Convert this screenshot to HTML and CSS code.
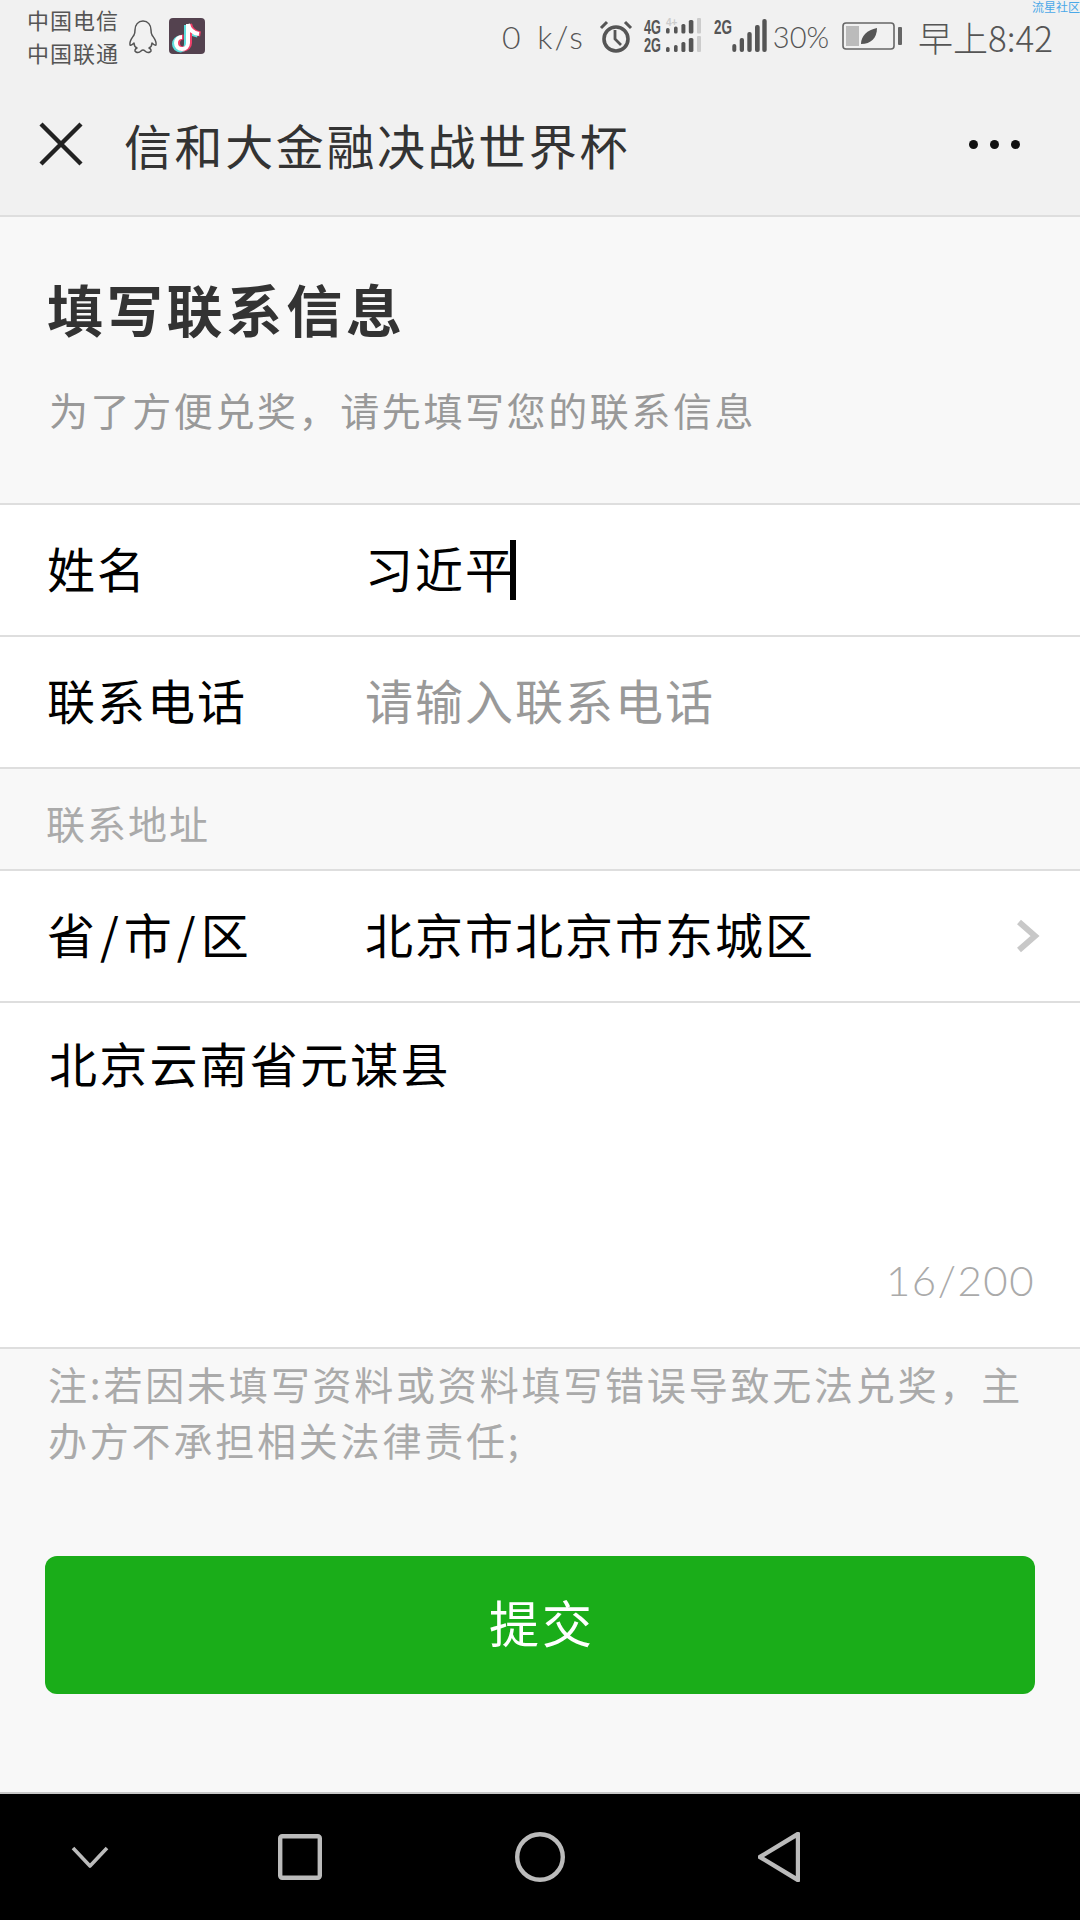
FILE: index.html
```html
<!DOCTYPE html>
<html>
<head>
<title>填写联系信息</title>
<meta http-equiv='Content-Type' content='text/html; charset=utf-8' />
<link rel="stylesheet" href="styles.css">
</head>
<body>
<div class="page">
	<div class="top">
		<div class="status">
			<div class="carrier"><div>中国电信</div><div>中国联通</div></div>
			<svg class="qq" width="30" height="34" viewBox="0 0 30 34" fill="none" stroke="#555" stroke-width="1.5" stroke-linejoin="round">
				<path d="M15 1c-5 0-8 4-8 9 0 2 0 3-1 5-2 3-5 6-4 10 1 1 3-1 4-2 0 2 1 4 3 5-2 1-3 3-1 4 2 1 4 0 5-1 1-1 1-1 2-1s1 0 2 1c1 1 3 2 5 1 2-1 1-3-1-4 2-1 3-3 3-5 1 1 3 3 4 2 1-4-2-7-4-10-1-2-1-3-1-5 0-5-3-9-8-9z"/>
			</svg>
			<svg class="tiktok" width="36" height="36" viewBox="0 0 36 36">
				<rect width="36" height="36" rx="4" fill="#54424f"/>
				<path d="M19 6v19a6 6 0 1 1-6-6M19 6c1 5 5 9 11 10" fill="none" stroke="#5fe0e0" stroke-width="5" transform="translate(-1.5 1)"/>
				<path d="M19 6v19a6 6 0 1 1-6-6M19 6c1 5 5 9 11 10" fill="none" stroke="#f0406a" stroke-width="5" transform="translate(1.5 0)"/>
				<path d="M19 6v19a6 6 0 1 1-6-6M19 6c1 5 5 9 11 10" fill="none" stroke="#fff" stroke-width="4"/>
			</svg>
			<div class="indicators">
				<span class="speed">0 k/s</span>
				<svg class="alarm" width="32" height="34" viewBox="0 0 32 34" fill="none" stroke="#555">
					<circle cx="16" cy="20" r="12" stroke-width="3.6"/>
					<path d="M15 11v9l6 6" stroke-width="2.8"/>
					<path d="M1 9l6-6M31 9l-6-6" stroke-width="3"/>
				</svg>
				<svg class="dual" width="58" height="36" viewBox="0 0 58 36">
					<text x="0" y="16" class="net" textLength="17" lengthAdjust="spacingAndGlyphs">4G</text>
					<text x="0" y="34" class="net" textLength="17" lengthAdjust="spacingAndGlyphs">2G</text>
					<text x="22" y="8" class="plus">4+</text>
					<g fill="#555">
						<rect x="22" y="10" width="3.6" height="5.5" rx="1.6"/><rect x="30" y="8.5" width="3.6" height="7" rx="1.6"/><rect x="37.4" y="6" width="4" height="9.5" rx="1.6"/><rect x="44.8" y="2" width="4.6" height="13.5" rx="1.6"/>
						<rect x="22" y="29" width="3.6" height="5" rx="1.6"/><rect x="30" y="27" width="3.6" height="7" rx="1.6"/><rect x="37.4" y="24" width="4" height="10" rx="1.6"/><rect x="44.8" y="20" width="4.6" height="14" rx="1.6"/>
					</g>
					<rect x="53" y="0" width="4" height="15.5" rx="1" fill="#ccc"/>
					<rect x="53" y="18" width="4" height="16" rx="1" fill="#ccc"/>
				</svg>
				<svg class="single" width="54" height="36" viewBox="0 0 54 36">
					<text x="0" y="16" class="net" textLength="18" lengthAdjust="spacingAndGlyphs">2G</text>
					<g fill="#555">
						<rect x="18.3" y="26" width="4" height="8" rx="2"/><rect x="25.7" y="20" width="4.3" height="14" rx="2"/><rect x="33.3" y="14" width="4.4" height="20" rx="2"/><rect x="41" y="7" width="4.7" height="27" rx="2"/><rect x="48.3" y="1" width="4.4" height="33" rx="2"/>
					</g>
				</svg>
				<span class="pct">30%</span>
				<svg class="battery" width="61" height="28" viewBox="0 0 61 28">
					<rect x="1" y="1" width="51" height="26" rx="3" fill="none" stroke="#666" stroke-width="1.6"/>
					<rect x="4" y="4" width="13" height="20" fill="#bbb"/>
					<path d="M19 22c0-8 6-14 16-16 0 10-6 16-16 16z" fill="#555"/>
					<rect x="56" y="5" width="4" height="18" rx="1" fill="#666"/>
				</svg>
				<span class="clock">早上8:42</span>
			</div>
			<span class="mark">流星社区</span>
		</div>
		<div class="nav">
			<svg class="close" width="44" height="44" viewBox="0 0 44 44" fill="none" stroke="#222" stroke-width="4.4">
				<path d="M2 2l40 40M42 2L2 42"/>
			</svg>
			<div class="title">信和大金融决战世界杯</div>
			<div class="more"><i></i><i></i><i></i></div>
		</div>
	</div>

	<div class="intro">
		<h1>填写联系信息</h1>
		<p>为了方便兑奖，请先填写您的联系信息</p>
	</div>

	<div class="group">
		<div class="row">
			<span class="label">姓名</span>
			<span class="value">习近平<b class="caret"></b></span>
		</div>
		<div class="row">
			<span class="label">联系电话</span>
			<span class="value hint">请输入联系电话</span>
		</div>
	</div>

	<div class="section">联系地址</div>

	<div class="group">
		<div class="row">
			<span class="label wide">省/市/区</span>
			<span class="value">北京市北京市东城区</span>
			<svg class="arrow" width="24" height="34" viewBox="0 0 24 34" fill="none" stroke="#c8c8c8" stroke-width="6">
				<path d="M3 3l16 14L3 31"/>
			</svg>
		</div>
		<div class="area">
			<div class="area-text">北京云南省元谋县</div>
			<div class="count">16/200</div>
		</div>
	</div>

	<p class="note">注:若因未填写资料或资料填写错误导致无法兑奖，主办方不承担相关法律责任;</p>

	<div class="btn">提交</div>

	<div class="spacer"></div>

	<div class="keys">
		<svg width="38" height="22" viewBox="0 0 38 22" fill="none" stroke="#bbb" stroke-width="3.6" stroke-linejoin="round"><path d="M2 2l17 18L36 2"/></svg>
		<svg width="44" height="46" viewBox="0 0 44 46" fill="none" stroke="#bbb" stroke-width="4.4"><rect x="2.2" y="2.2" width="39.6" height="41.6" rx="2"/></svg>
		<svg width="50" height="50" viewBox="0 0 50 50" fill="none" stroke="#bbb" stroke-width="4.4"><circle cx="25" cy="25" r="22.8"/></svg>
		<svg width="42" height="50" viewBox="0 0 42 50" fill="none" stroke="#bbb" stroke-width="4.4" stroke-linejoin="round"><path d="M40 2v46L2 25z"/></svg>
	</div>
</div>
</body>
</html>
```

FILE: styles.css
```css
html,body{margin:0;padding:0;}
body{font-family:"Noto Sans CJK SC","Noto Sans",sans-serif;color:#000;background:#f8f8f8;}
.page{width:1080px;height:1920px;display:flex;flex-direction:column;overflow:hidden;}

.top{background:#f1f1f1;border-bottom:2px solid #dedede;}
.status{position:relative;height:72px;padding-left:27px;display:flex;align-items:center;color:#555;}
.status svg{overflow:visible;}
.carrier{width:92px;font-size:22px;line-height:33px;letter-spacing:1px;margin-top:-1px;}
.qq{margin-left:9px;margin-top:2px;}
.tiktok{margin-left:11px;}
.indicators{margin-left:auto;padding-right:27px;display:flex;align-items:center;}
.speed{font-family:Lato,sans-serif;font-size:32px;font-weight:300;word-spacing:4px;letter-spacing:2px;}
.alarm{margin-left:15px;}
.dual{margin-left:12px;}
.single{margin-left:12px;}
.net{font-family:"Liberation Sans Narrow","Liberation Sans",sans-serif;font-size:20px;font-weight:700;fill:#555;}
.plus{font-family:"Liberation Sans",sans-serif;font-size:10px;font-weight:700;fill:#ccc;}
.pct{font-family:Lato,sans-serif;font-size:29px;font-weight:300;margin-left:5px;}
.battery{margin-left:13px;}
.clock{font-size:35px;font-weight:300;margin-left:15px;white-space:nowrap;}
.mark{position:absolute;top:0;right:0;font-size:12px;line-height:13px;color:#4aa8e8;}

.nav{height:143px;padding:0 60px 0 39px;display:flex;align-items:center;}
.close{flex:none;}
.title{margin-left:41px;font-size:48px;letter-spacing:2.6px;color:#333;flex:1;}
.more{display:flex;gap:12px;margin-top:2px;}
.more i{display:block;width:9px;height:9px;border-radius:50%;background:#111;}

.intro{height:288px;padding-left:47px;box-sizing:border-box;border-bottom:2px solid #dedede;}
.intro h1{margin:0;padding-top:55px;font-size:56px;line-height:72px;letter-spacing:3.8px;font-weight:700;color:#333;}
.intro p{margin:0;padding:38px 0 0 2px;font-size:39px;line-height:54px;letter-spacing:2.6px;color:#999;}

.group{background:#fff;}
.row{height:132px;box-sizing:border-box;padding:0 40px 6px 47px;display:flex;align-items:center;border-bottom:2px solid #dedede;}
.label{width:318px;flex:none;font-size:48px;letter-spacing:2px;}
.wide{letter-spacing:5px;}
.value{flex:1;display:flex;align-items:center;font-size:48px;letter-spacing:2px;white-space:nowrap;}
.hint{color:#999;}
.caret{display:block;width:6px;height:60px;margin:6px 0 0 -5px;background:#000;}
.arrow{flex:none;margin-top:6px;}

.section{height:102px;padding-left:46px;box-sizing:border-box;border-bottom:2px solid #dedede;font-size:39px;line-height:106px;letter-spacing:2px;color:#aaa;}

.area{height:346px;padding:24px 45px 0 49px;box-sizing:border-box;border-bottom:2px solid #dedede;display:flex;flex-direction:column;}
.area-text{font-size:48px;line-height:70px;letter-spacing:2.2px;}
.count{margin-top:auto;padding-bottom:39px;text-align:right;font-family:Lato,sans-serif;font-weight:300;font-size:42px;line-height:56px;letter-spacing:1.5px;color:#aaa;}

.note{margin:0;padding:6px 46px 0 48px;font-size:39px;line-height:56px;letter-spacing:2.8px;color:#aaa;}

.btn{margin:89px 45px 0;padding-left:4px;height:138px;flex:none;border-radius:12px;background:#1aad19;color:#fff;font-size:50px;line-height:130px;letter-spacing:3px;text-align:center;}

.spacer{flex:1;}

.keys{height:126px;flex:none;background:#000;border-top:2px solid #c8c8c8;display:flex;align-items:center;padding-left:71px;}
.keys svg:nth-child(2){margin-left:169px;}
.keys svg:nth-child(3){margin-left:193px;}
.keys svg:nth-child(4){margin-left:193px;}
```
